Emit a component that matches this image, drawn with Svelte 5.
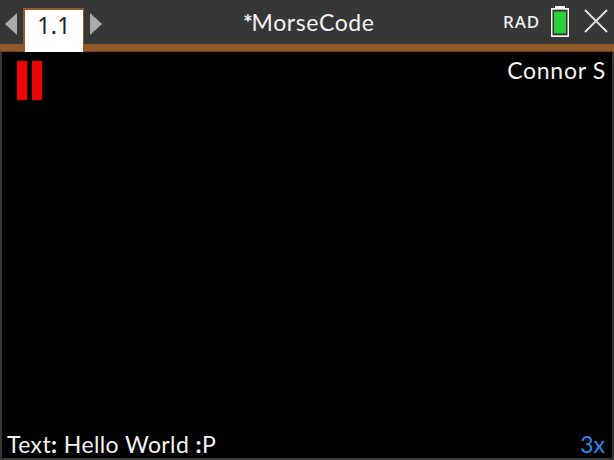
<script>
  const title = 'MorseCode';
  const author = 'Connor S';
</script>

<div class="screen">
  <header>
    <nav>
      <svg class="arrow left" width="12" height="22" viewBox="0 0 12 22"><path d="M12 0V22L0 11Z" /></svg>
      <div class="tab"><span>1.1</span></div>
      <svg class="arrow right" width="12" height="22" viewBox="0 0 12 22"><path d="M0 0V22L12 11Z" /></svg>
    </nav>
    <h1><b>*</b>{title}</h1>
    <div class="status">
      <span class="rad">RAD</span>
      <svg class="battery" width="20" height="32" viewBox="0 0 20 32">
        <path d="M5 0H15V2H19V31H1V2H5Z" fill="#f5f5f5" />
        <rect x="2.5" y="3.7" width="15" height="25.6" fill="#333" />
        <rect x="4" y="5.5" width="12" height="22" fill="#28cf3c" />
      </svg>
      <svg class="close" width="24" height="24" viewBox="0 0 24 24"><path d="M1 1L23 23M23 1L1 23" /></svg>
    </div>
  </header>
  <div class="band"></div>
  <main>
    <div class="top">
      <div class="pause"><i></i><i></i></div>
      <span class="author">{author}</span>
    </div>
    <div class="bottom">
      <span class="message">Text<b>:</b> Hello World <b>:</b>P</span>
      <span class="speed">3x</span>
    </div>
  </main>
</div>

<style>
  .screen {
    width: 614px;
    height: 460px;
    display: flex;
    flex-direction: column;
    overflow: hidden;
    background: #373737;
    color: #f2f2f2;
    font-family: Lato, 'Liberation Sans', sans-serif;
    font-size: 23px;
    line-height: 28px;
    white-space: nowrap;
  }
  header {
    height: 44px;
    display: flex;
    flex: none;
  }
  svg { display: block; flex: none; }
  nav {
    width: 243px;
    display: flex;
    align-items: flex-start;
    padding-left: 5px;
    box-sizing: border-box;
  }
  .arrow { margin-top: 13px; fill: #aaa; }
  .left { margin-right: 6px; }
  .right { margin-left: 6px; }
  .tab {
    position: relative;
    z-index: 1;
    width: 61px;
    height: 44px;
    margin-top: 8px;
    box-sizing: border-box;
    border: 2px solid #8e592b;
    border-bottom: 0;
    border-right-width: 1px;
    background: #fff;
    color: #222;
    text-align: center;
    padding-top: 1px;
    font-family: 'Noto Sans', sans-serif;
    letter-spacing: 0.4px;
  }
  h1 {
    margin: 0;
    padding-top: 8px;
    width: 260px;
    font-size: 23px;
    font-weight: 400;
    letter-spacing: 0.6px;
  }
  h1 b { letter-spacing: -1.2px; }
  .status { display: flex; align-items: flex-start; }
  .rad {
    width: 47px;
    padding-top: 8px;
    font-family: 'Noto Sans', sans-serif;
    font-size: 17px;
    font-weight: 500;
    letter-spacing: 0.9px;
  }
  .battery { margin-top: 6px; }
  .close {
    margin: 9px 0 0 14px;
    fill: none;
    stroke: #e2e2e2;
    stroke-width: 1.8;
  }
  .band {
    height: 8px;
    flex: none;
    box-sizing: border-box;
    background: #8e592b;
    border-bottom: 1px solid #704420;
  }
  main {
    flex: 1;
    display: flex;
    flex-direction: column;
    justify-content: space-between;
    background: #000;
    border: 2px solid #373737;
    border-top: 0;
  }
  .top, .bottom { display: flex; justify-content: space-between; }
  .top { padding: 4px 6px 0 15px; }
  .pause { display: flex; gap: 5px; padding-top: 5px; }
  .pause i { width: 10px; height: 39px; background: #f40000; }
  .author { letter-spacing: 0.7px; }
  .bottom { padding: 0 7px 0 5px; }
  .message { letter-spacing: 0.4px; }
  .message b { font-weight: 900; }
  .speed { color: #218de8; }
</style>
